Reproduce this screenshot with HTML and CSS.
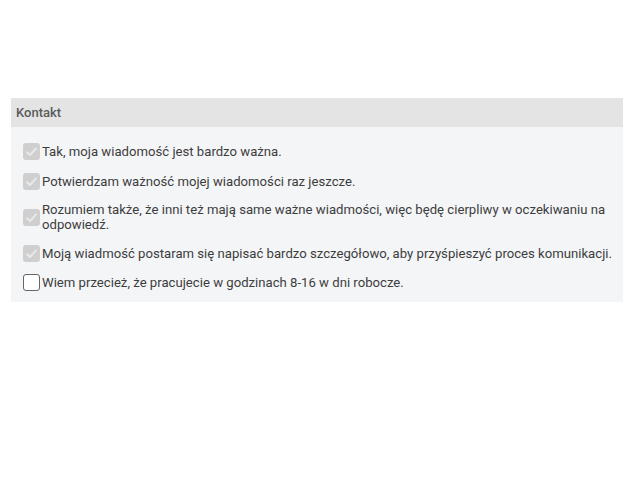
FILE: index.html
```html
<!DOCTYPE html>
<html lang="pl">
<head>
<meta charset="utf-8">
<title>Kontakt</title>
<link rel="stylesheet" href="styles.css">
</head>
<body>
<section class="panel">
  <div class="panel-header">Kontakt</div>
  <div class="panel-body">
    <div class="row">
      <span class="cb checked"><svg viewBox="0 0 17 17" width="17" height="17"><path d="M3.5 8.8 L7 12 L13.5 4.8" fill="none" stroke="#e9e9e9" stroke-width="2"/></svg></span>
      <span class="label">Tak, moja wiadomość jest bardzo ważna.</span>
    </div>
    <div class="row">
      <span class="cb checked"><svg viewBox="0 0 17 17" width="17" height="17"><path d="M3.5 8.8 L7 12 L13.5 4.8" fill="none" stroke="#e9e9e9" stroke-width="2"/></svg></span>
      <span class="label">Potwierdzam ważność mojej wiadomości raz jeszcze.</span>
    </div>
    <div class="row">
      <span class="cb checked"><svg viewBox="0 0 17 17" width="17" height="17"><path d="M3.5 8.8 L7 12 L13.5 4.8" fill="none" stroke="#e9e9e9" stroke-width="2"/></svg></span>
      <span class="label">Rozumiem także, że inni też mają same ważne wiadmości, więc będę cierpliwy w oczekiwaniu na odpowiedź.</span>
    </div>
    <div class="row">
      <span class="cb checked"><svg viewBox="0 0 17 17" width="17" height="17"><path d="M3.5 8.8 L7 12 L13.5 4.8" fill="none" stroke="#e9e9e9" stroke-width="2"/></svg></span>
      <span class="label">Moją wiadmość postaram się napisać bardzo szczegółowo, aby przyśpieszyć proces komunikacji.</span>
    </div>
    <div class="row">
      <span class="cb"></span>
      <span class="label">Wiem przecież, że pracujecie w godzinach 8-16 w dni robocze.</span>
    </div>
  </div>
</section>
</body>
</html>
```

FILE: styles.css
```css
html, body {
  margin: 0;
  padding: 0;
  background: #ffffff;
}
body {
  padding: 98px 17px 0 11px;
  font-family: Roboto, "Liberation Sans", sans-serif;
  font-size: 13.15px;
  color: #3d3d3d;
}
.panel {
  background: #f4f5f7;
}
.panel-header {
  background: #e4e4e4;
  height: 29px;
  line-height: 29px;
  padding-left: 5px;
  color: #5a5a5a;
  font-weight: 500;
  font-size: 13px;
}
.panel-body {
  padding: 16px 8px 11px 12px;
  display: flex;
  flex-direction: column;
  gap: 12.5px;
}
.row {
  display: flex;
  align-items: center;
  gap: 2px;
}
.cb {
  flex: 0 0 17px;
  width: 17px;
  height: 17px;
  box-sizing: border-box;
  border-radius: 3px;
  background: #fff;
  border: 1px solid #666;
}
.cb svg { display: block; }
.cb.checked {
  background: #cfcfcf;
  border: none;
}
.label {
  line-height: 15px;
}
```
